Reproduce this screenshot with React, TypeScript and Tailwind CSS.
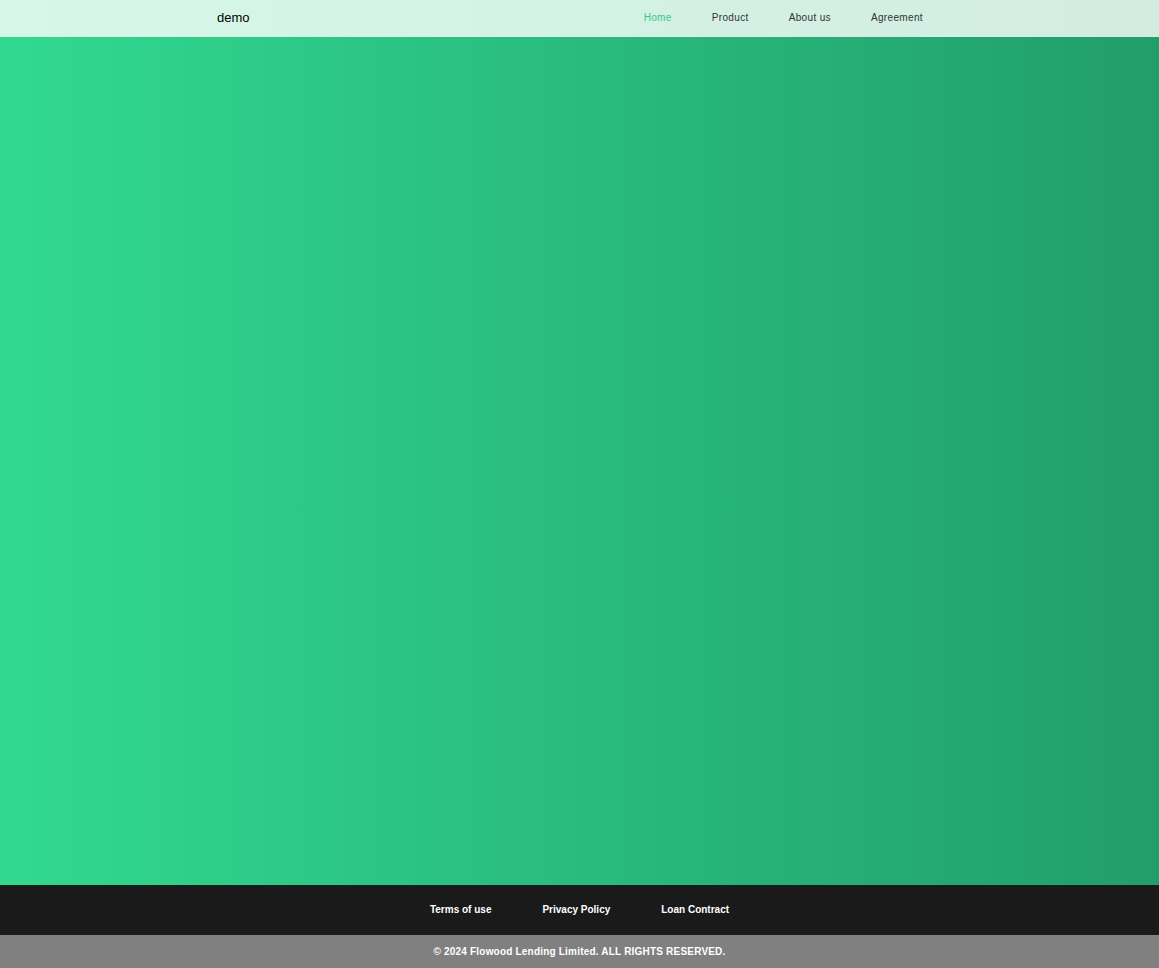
export default function App() {
  const nav = ["Home", "Product", "About us", "Agreement"];
  const links = ["Terms of use", "Privacy Policy", "Loan Contract"];

  return (
    <div className="flex min-h-[968px] flex-col font-['Liberation_Sans',Arial,sans-serif]">
      <div className="flex flex-1 flex-col bg-gradient-to-r from-[#31d990] to-[#219e6b]">
        <header className="flex h-[37px] items-center bg-white/80 pb-[2px]">
          <div className="ml-[217px] text-[13px] text-black">demo</div>
          <nav className="ml-auto mr-[236px] flex items-center gap-[40px] text-[10px] tracking-[0.35px]">
            {nav.map((item, i) => (
              <a
                key={item}
                className={i === 0 ? "text-[#2ecc87]" : "text-[#333]"}
              >
                {item}
              </a>
            ))}
          </nav>
        </header>
        <main className="flex-1" />
      </div>

      <footer>
        <div className="flex h-[50px] items-center justify-center gap-[51px] bg-[#1a1a1a] pb-[2px] text-[10px] font-bold text-white">
          {links.map((l) => (
            <a key={l}>{l}</a>
          ))}
        </div>
        <div className="flex h-[33px] items-center justify-center bg-[#808080] text-[10px] font-bold tracking-[0.2px] text-white">
          © 2024 Flowood Lending Limited. ALL RIGHTS RESERVED.
        </div>
      </footer>
    </div>
  );
}
